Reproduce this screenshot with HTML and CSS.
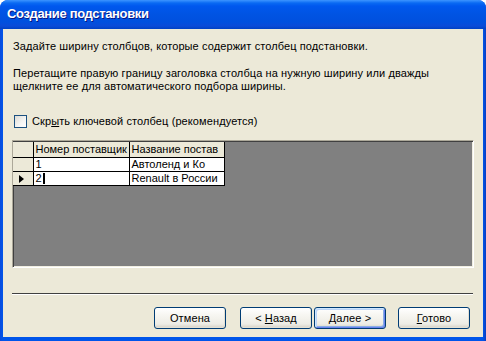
FILE: index.html
```html
<!DOCTYPE html>
<html>
<head>
<meta charset="utf-8">
<link rel="stylesheet" href="styles.css">
</head>
<body>
<div class="window">
  <div class="titlebar"><span class="title">Создание подстановки</span></div>
  <div class="client">
    <p class="p1">Задайте ширину столбцов, которые содержит столбец подстановки.</p>
    <p class="p2">Перетащите правую границу заголовка столбца на нужную ширину или дважды<br>щелкните ее для автоматического подбора ширины.</p>
    <label class="check"><span class="box"></span><span>Скр<u>ы</u>ть ключевой столбец (рекомендуется)</span></label>
    <div class="grid">
      <table class="sheet">
        <colgroup><col class="k0"><col class="k1"><col class="k2"></colgroup>
        <tr class="head"><td class="sel"></td><td>Номер поставщик</td><td>Название постав</td></tr>
        <tr><td class="sel"></td><td class="cell">1</td><td class="cell">Автоленд и Ко</td></tr>
        <tr><td class="sel"><span class="arrow"></span></td><td class="cell">2<span class="caret"></span></td><td class="cell">Renault в России</td></tr>
      </table>
    </div>
    <div class="sep"></div>
    <div class="buttons">
      <button class="btn">Отмена</button>
      <button class="btn back">&lt; <u>Н</u>азад</button>
      <button class="btn def"><u>Д</u>алее &gt;</button>
      <button class="btn fin"><u>Г</u>отово</button>
    </div>
  </div>
</div>
</body>
</html>
```
FILE: styles.css
```css
html, body { margin: 0; padding: 0; }
body { width: 486px; height: 341px; overflow: hidden; background: #fff; }
.window {
  width: 486px; height: 341px; box-sizing: border-box;
  background: linear-gradient(90deg, #0A4BDD 0%, #0055EA 3px, #0055EA calc(100% - 3px), #0A3DC0 100%);
  border-radius: 8px 8px 0 0;
  display: flex; flex-direction: column;
  padding: 0 3px 4px 3px;
  font-family: "Liberation Sans", Arial, sans-serif;
}
.titlebar {
  height: 29px; margin: 0 -3px; border-radius: 8px 8px 0 0;
  background: linear-gradient(180deg, #3D95FF 0px, #0A6AF3 3px, #0058EE 6px, #0054E3 14px, #0050DE 22px, #0A4BD8 26px, #0041C4 29px);
  display: flex; align-items: center; padding: 0 0 2px 7px; box-sizing: border-box;
}
.title {
  color: #fff; font-weight: bold; font-size: 13px; letter-spacing: -0.35px;
  text-shadow: 1px 1px 0 #0A1883;
}
.client {
  flex: 1; background: #ECE9D8; box-sizing: border-box;
  padding: 11px 11px 0 10px; font-size: 11px; color: #000; letter-spacing: 0.1px;
  display: flex; flex-direction: column;
}
p { margin: 0; line-height: 13px; }
.p2 { margin-top: 14px; }
.check { display: flex; align-items: center; height: 13px; margin-top: 22px; line-height: 13px; }
.box {
  width: 11px; height: 11px; margin: 0 5px 0 1px;
  border: 1px solid #1C5180;
  background: linear-gradient(135deg, #DCDBD5 0%, #F6F6F4 60%, #fff 100%);
}
.grid {
  margin: 12px 0 0 -1px; width: 462px; height: 128px; box-sizing: border-box;
  background: #808080;
  border-top: 1px solid #ACA899; border-left: 1px solid #ACA899;
  border-right: 1px solid #fff; border-bottom: 1px solid #fff;
  box-shadow: inset 1px 1px 0 #404040, inset -1px -1px 0 #F1EFE2;
  padding: 1px 0 0 0;
}
.sheet { border-collapse: collapse; table-layout: fixed; width: 211px; letter-spacing: 0; }
.k0 { width: 20px; }
.k1 { width: 96px; }
.k2 { width: 95px; }
.sheet td {
  padding: 0 0 0 2px; height: 14px; line-height: 13px; font-size: 11px;
  white-space: nowrap; overflow: hidden; border: 1px solid #000; box-sizing: border-box;
}
.sheet tr:first-child td { border-top: 0; }
.sheet td:first-child { border-left: 0; }
.head td { height: 15px; background: #ECE9D8; }
.sel { background: #ECE9D8; position: relative; }
.cell { background: #fff; }
.arrow {
  position: absolute; left: 6px; top: 3px; width: 0; height: 0;
  border-top: 4px solid transparent; border-bottom: 4px solid transparent; border-left: 5px solid #000;
}
.caret { display: inline-block; width: 2px; height: 11px; background: #000; vertical-align: -2px; margin-left: 1px; }
.sep { margin: 25px 0 0 -1px; width: 461px; height: 1px; background: #404040; border-bottom: 1px solid #fff; }
.buttons { display: flex; justify-content: flex-end; margin-top: 12px; padding-right: 2px; }
.btn {
  width: 72px; height: 22px; box-sizing: border-box; padding: 0; margin: 0;
  font-family: "Liberation Sans", Arial, sans-serif; font-size: 11px; color: #000; letter-spacing: 0.1px;
  border: 1px solid #003C74; border-radius: 3px;
  background: linear-gradient(180deg, #FFFFFF 0%, #F6F5F0 40%, #EDECE5 80%, #D6D0C5 100%);
  box-shadow: inset -1px -1px 0 #E3E0D4;
}
.back { margin-left: 14px; }
.def {
  margin-left: 2px;
  box-shadow: inset 1px 1px 0 #CEE7FF, inset -1px -1px 0 #6982EE, inset 2px 2px 0 #BCD4F6, inset -2px -2px 0 #89ADE4;
}
.fin { margin-left: 12px; }
```
